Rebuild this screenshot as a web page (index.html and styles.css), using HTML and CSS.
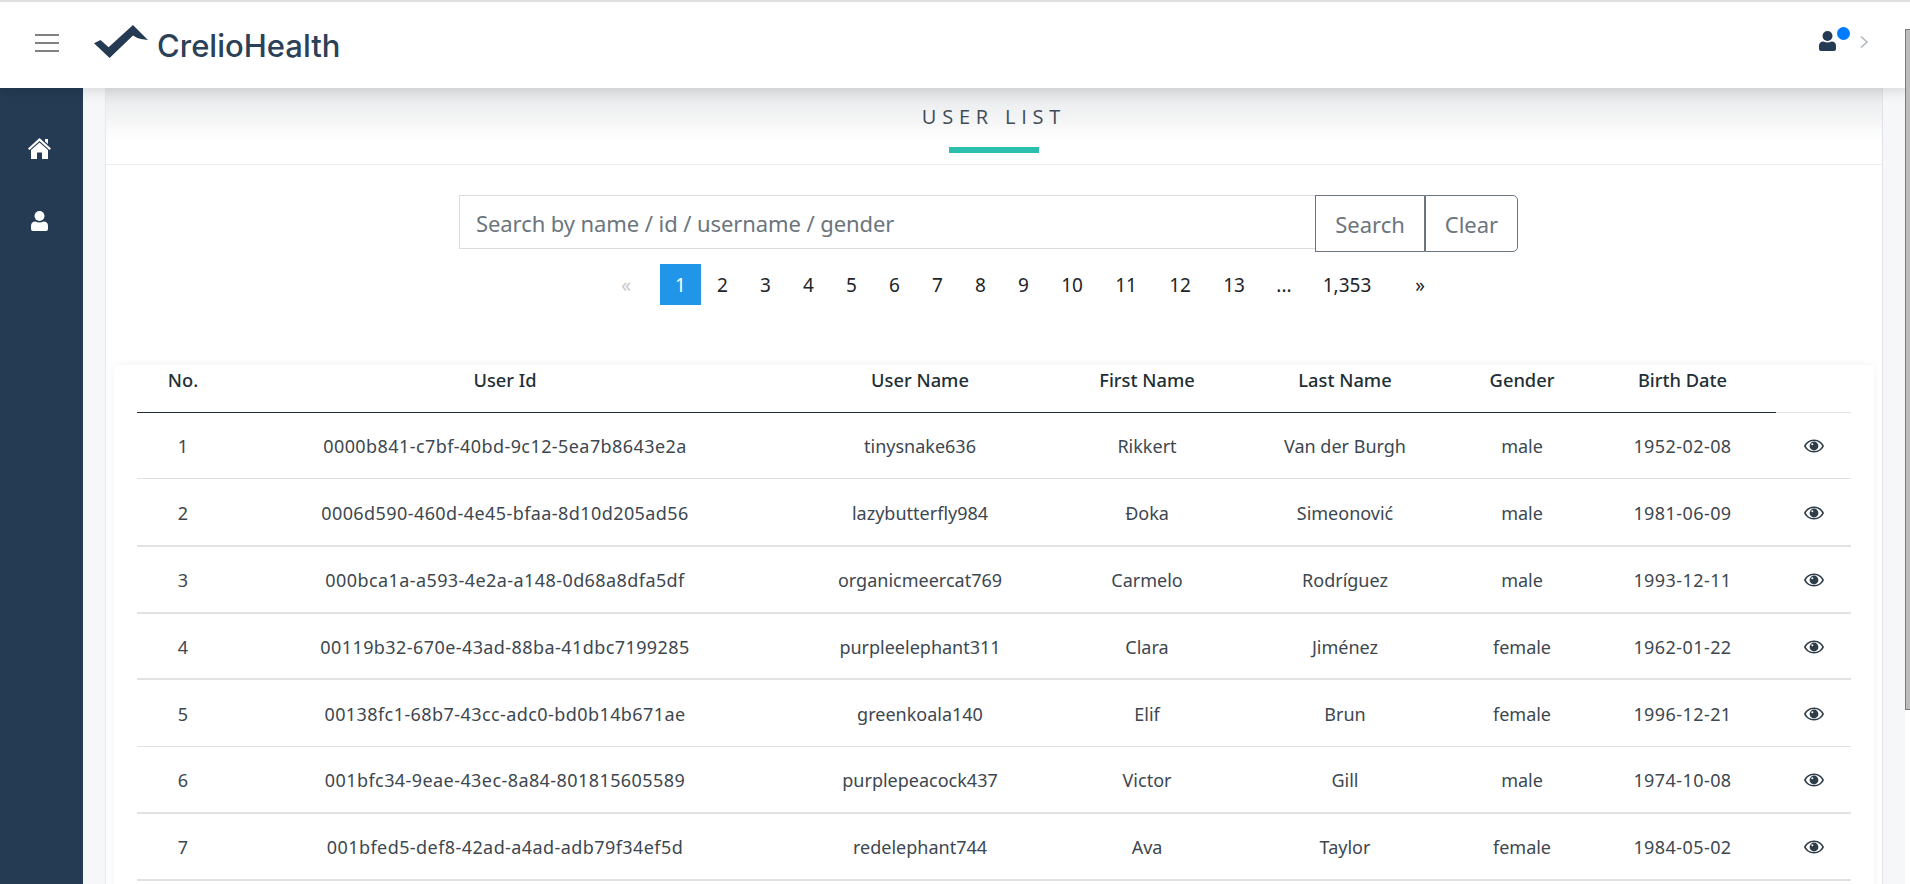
FILE: index.html
```html
<!DOCTYPE html>
<html lang="en">
<head>
<meta charset="utf-8">
<title>User List</title>
<link rel="stylesheet" href="styles.css">
</head>
<body>
<header class="topbar">
  <button class="burger" aria-label="Menu"><span></span><span></span><span></span></button>
  <div class="logo">
    <svg class="logo-mark" viewBox="0 0 54 33"><path fill="#243b53" d="M0 18.300 L6.500 15 L14.600 22.300 L39 0 L54 15 L47 14 Q43 13.500 39 10.600 L15.600 33 Z"/></svg>
    <span class="logo-text">CrelioHealth</span>
  </div>
  <div class="account">
    <svg class="account-icon" viewBox="0 0 17 20"><circle cx="8.500" cy="5" r="5" fill="#243b53"/><path fill="#243b53" d="M2 20 Q0 20 0 18 V15 Q0 10.500 4.500 10.500 Q8.500 12.500 12.500 10.500 Q17 10.500 17 15 V18 Q17 20 15 20 Z"/></svg>
    <span class="account-dot"></span>
    <svg class="account-chev" viewBox="0 0 10 14"><path d="M2 1.500 L8 7 L2 12.500" fill="none" stroke="#adb5bd" stroke-width="1.500"/></svg>
  </div>
</header>
<div class="layout">
  <nav class="sidebar">
    <svg class="nav-icon" viewBox="0 0 23 21"><path fill="#fff" d="M11.500 0 L23 10.500 L21.500 12 L11.500 3 L1.500 12 L0 10.500 Z M11.500 4.500 L20 12 V21 H14 V14.500 H9 V21 H3 V12 Z M17 1 H20 V6 L17 3.500 Z"/></svg>
    <svg class="nav-user" viewBox="0 0 17 20"><circle cx="8.500" cy="5" r="5" fill="#fff"/><path fill="#fff" d="M2 20 Q0 20 0 18 V15 Q0 10.500 4.500 10.500 Q8.500 12.500 12.500 10.500 Q17 10.500 17 15 V18 Q17 20 15 20 Z"/></svg>
  </nav>
  <main class="content">
    <section class="card">
      <div class="card-title">
        <h1>USER LIST</h1>
        <span class="title-bar"></span>
      </div>
      <form class="search">
        <input class="search-input" type="text" placeholder="Search by name / id / username / gender">
        <button class="btn" type="button">Search</button>
        <button class="btn btn-last" type="button">Clear</button>
      </form>
      <ul class="pager">
        <li class="pg pg-prev">«</li>
        <li class="pg pg-active">1</li>
        <li class="pg">2</li><li class="pg">3</li><li class="pg">4</li><li class="pg">5</li>
        <li class="pg">6</li><li class="pg">7</li><li class="pg">8</li><li class="pg">9</li>
        <li class="pg pg-wide">10</li><li class="pg pg-wide">11</li><li class="pg pg-wide">12</li><li class="pg pg-wide">13</li>
        <li class="pg pg-dots">...</li>
        <li class="pg pg-last">1,353</li>
        <li class="pg pg-next">»</li>
      </ul>
      <div class="panel">
        <table class="users">
          <colgroup>
            <col class="c-no"><col class="c-id"><col class="c-user"><col class="c-first"><col class="c-last"><col class="c-gender"><col class="c-birth"><col class="c-act">
          </colgroup>
          <thead>
            <tr><th>No.</th><th>User Id</th><th>User Name</th><th>First Name</th><th>Last Name</th><th>Gender</th><th>Birth Date</th><th class="th-act"></th></tr>
          </thead>
          <tbody>
            <tr><td>1</td><td class="num">0000b841-c7bf-40bd-9c12-5ea7b8643e2a</td><td>tinysnake636</td><td>Rikkert</td><td>Van der Burgh</td><td>male</td><td class="num">1952-02-08</td><td><svg class="eye" viewBox="0 0 20 14"><use href="#eye"/></svg></td></tr>
            <tr><td>2</td><td class="num">0006d590-460d-4e45-bfaa-8d10d205ad56</td><td>lazybutterfly984</td><td>Đoka</td><td>Simeonović</td><td>male</td><td class="num">1981-06-09</td><td><svg class="eye" viewBox="0 0 20 14"><use href="#eye"/></svg></td></tr>
            <tr><td>3</td><td class="num">000bca1a-a593-4e2a-a148-0d68a8dfa5df</td><td>organicmeercat769</td><td>Carmelo</td><td>Rodríguez</td><td>male</td><td class="num">1993-12-11</td><td><svg class="eye" viewBox="0 0 20 14"><use href="#eye"/></svg></td></tr>
            <tr><td>4</td><td class="num">00119b32-670e-43ad-88ba-41dbc7199285</td><td>purpleelephant311</td><td>Clara</td><td>Jiménez</td><td>female</td><td class="num">1962-01-22</td><td><svg class="eye" viewBox="0 0 20 14"><use href="#eye"/></svg></td></tr>
            <tr><td>5</td><td class="num">00138fc1-68b7-43cc-adc0-bd0b14b671ae</td><td>greenkoala140</td><td>Elif</td><td>Brun</td><td>female</td><td class="num">1996-12-21</td><td><svg class="eye" viewBox="0 0 20 14"><use href="#eye"/></svg></td></tr>
            <tr><td>6</td><td class="num">001bfc34-9eae-43ec-8a84-801815605589</td><td>purplepeacock437</td><td>Victor</td><td>Gill</td><td>male</td><td class="num">1974-10-08</td><td><svg class="eye" viewBox="0 0 20 14"><use href="#eye"/></svg></td></tr>
            <tr><td>7</td><td class="num">001bfed5-def8-42ad-a4ad-adb79f34ef5d</td><td>redelephant744</td><td>Ava</td><td>Taylor</td><td>female</td><td class="num">1984-05-02</td><td><svg class="eye" viewBox="0 0 20 14"><use href="#eye"/></svg></td></tr>
          </tbody>
        </table>
      </div>
    </section>
  </main>
</div>
<div class="scrollbar"><span class="scroll-thumb"></span></div>
<svg class="defs" width="0" height="0"><defs>
  <symbol id="eye" viewBox="0 0 20 14"><path fill="#2f3d4a" fill-rule="evenodd" d="M10 0.500 C15 0.500 18.500 3.500 20 7 C18.500 10.500 15 13.500 10 13.500 C5 13.500 1.500 10.500 0 7 C1.500 3.500 5 0.500 10 0.500 Z M10 2 C6 2 3.200 4 1.800 7 C3.200 10 6 12 10 12 C14 12 16.800 10 18.200 7 C16.800 4 14 2 10 2 Z"/><circle cx="10" cy="7" r="4.400" fill="#2f3d4a"/><circle cx="8.300" cy="5.300" r="1" fill="#fff"/></symbol>
</defs></svg>
</body>
</html>
```
FILE: styles.css
```css
* { box-sizing: border-box; }
html, body { margin: 0; height: 884px; overflow: hidden; }
body { font-family: "Noto Sans", "Open Sans", Arial, sans-serif; background: #f6f7f9; color: #343a40; font-size: 16px; }
.defs { display: block; height: 0; }

.topbar { height: 88px; background: #fff; border-top: 2px solid #e0e0e0; padding-top: 1px; display: flex; align-items: center; padding-right: 5px; box-shadow: 0 2px 14px rgba(0,0,0,.14); position: relative; z-index: 2; }
.burger { margin-left: 35px; width: 24px; height: 18px; padding: 0; border: 0; background: none; display: flex; flex-direction: column; justify-content: space-between; margin-top: -6px; }
.burger span { display: block; height: 2px; background: #808080; }
.logo { display: flex; align-items: flex-end; margin-left: 35px; margin-top: -9px; }
.logo-mark { width: 54px; height: 33px; display: block; }
.logo-text { font-family: Inter, "Noto Sans", sans-serif; font-size: 31px; line-height: 30px; font-weight: 500; color: #2a4158; margin-left: 9px; margin-bottom: -3px; }
.account { margin-left: auto; display: flex; align-items: center; position: relative; margin-right: 36px; margin-top: -8px; }
.account-icon { width: 17px; height: 20px; display: block; margin-top: -1px; }
.account-dot { width: 13px; height: 13px; border-radius: 50%; background: #007bff; margin-left: 1px; margin-top: -16px; }
.account-chev { width: 10px; height: 14px; margin-left: 9px; margin-top: 0; }

.layout { display: flex; height: 796px; }
.sidebar { width: 83px; flex: none; background: #243b53; display: flex; flex-direction: column; align-items: center; padding: 50px 4px 0 0; gap: 52px; }
.nav-icon { width: 23px; height: 21px; display: block; }
.nav-user { width: 17px; height: 20px; display: block; }
.content { flex: 1; padding: 0 27px 0 22px; min-width: 0; }
.card { background: #fff; height: 100%; border-left: 1px solid #e6e8eb; border-right: 1px solid #e0e2e5; overflow: hidden; }
.card-title { height: 77px; background: linear-gradient(#e6e7e9, #fff 70%); border-bottom: 1px solid #eceef0; display: flex; flex-direction: column; align-items: center; }
.card-title h1 { margin: 15px 0 0; font-size: 20px; line-height: 28px; font-weight: 400; letter-spacing: 5.800px; color: #3f4b56; font-family: "Open Sans", sans-serif; }
.title-bar { width: 90px; height: 6px; background: #2cbfae; margin-top: 16px; }

.search { display: flex; align-items: flex-start; margin: 30px 0 0 353px; width: 1059px; height: 57px; }
.search-input { width: 856px; height: 54px; border: 1px solid #dcdcdc; border-right: 0; padding: 2px 16px 0; font: 22px "Noto Sans", sans-serif; letter-spacing: -.08px; color: #6c757d; outline: 0; }
.search-input::placeholder { color: #6c757d; opacity: 1; }
.btn { height: 57px; width: 110px; background: #fff; border: 1px solid #6c757d; color: #6c757d; font: 22px "Noto Sans", sans-serif; padding: 0; }
.btn-last { width: 93px; border-radius: 0 5px 5px 0; }

.pager { list-style: none; margin: 12px 0 0 500px; padding: 0; display: flex; height: 41px; align-items: center; color: #212529; font-size: 19px; }
.pg { width: 43px; height: 41px; line-height: 43px; text-align: center; }
.pg-prev { width: 54px; padding-right: 14px; color: #c6c8ca; }
.pg-active { width: 41px; background: #2196e8; color: #fff; }
.pg-wide { width: 54px; }
.pg-dots { width: 46px; }
.pg-last { width: 80px; }
.pg-next { width: 66px; }

.panel { margin: 60px 8px 0 8px; background: #fff; box-shadow: 0 0 10px rgba(0,0,0,.05); padding: 0 24px 0 23px; height: 600px; }
.users { width: 1714px; border-collapse: collapse; table-layout: fixed; }
.c-no { width: 92px; } .c-id { width: 552px; } .c-user { width: 278px; } .c-first { width: 176px; }
.c-last { width: 220px; } .c-gender { width: 134px; } .c-birth { width: 187px; } .c-act { width: 75px; }
.users th { height: 47px; font-size: 18.300px; font-weight: 500; color: #212f35; text-align: center; padding: 0 0 17px; border-bottom: 1px solid #212f35; }
.users th.th-act { border-bottom-color: #dee2e6; }
.users td { height: 66.860px; text-align: center; font-size: 18px; color: #3d4750; padding: 1px 0 0; border-bottom: 2px solid #e2e2e2; }
.users tbody tr:nth-child(4n+1) td { border-bottom-width: 1px; }
.users td.num { letter-spacing: .42px; }
.eye { width: 20px; height: 14px; display: block; margin: 0 auto; }

.scrollbar { position: absolute; top: 3px; right: 0; width: 5px; height: 881px; background: #fff; z-index: 3; }
.scroll-thumb { display: block; margin-top: 26px; height: 681px; background: #bdbdbd; border: 1px solid #7a7a7a; border-right: 0; }
```
